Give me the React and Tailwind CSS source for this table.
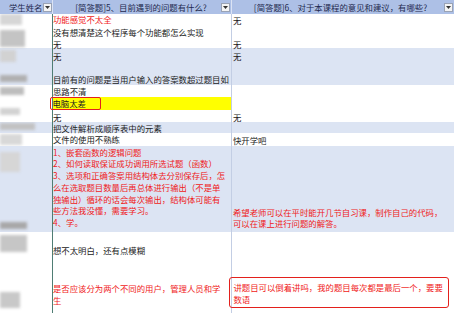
import React from 'react';

const RED = 'text-[#f01a1a]';

function Drop() {
  return (
    <div className="w-[9px] h-[9px] shrink-0 bg-[#f4f4f4] border border-[#9aa3b5] flex items-center justify-center">
      <svg width="5" height="3" viewBox="0 0 5 3">
        <path d="M0 0h5L2.5 3z" fill="#333" />
      </svg>
    </div>
  );
}

function L({ children, className = '' }) {
  return <div className={`h-[12px] leading-[12px] whitespace-nowrap ${className}`}>{children}</div>;
}

function L2({ children, className = '' }) {
  return <div className={`h-[11.8px] leading-[11.8px] whitespace-nowrap ${className}`}>{children}</div>;
}

function Blob({ className }) {
  return <div className={`blur-[1.5px] shrink-0 ${className}`} />;
}

function Band({ bg, h, a, b, c }) {
  return (
    <div className={`grid grid-cols-[53px_179px_1fr] ${bg} ${h}`}>
      <div className="border-r border-[#4f7d74] flex flex-col overflow-hidden">{a}</div>
      <div className="border-r border-[#c3cee4] flex flex-col min-w-0">{b}</div>
      <div className="flex flex-col min-w-0 pl-[1px]">{c}</div>
    </div>
  );
}

export default function App() {
  return (
    <div className="w-[454px] h-[313px] overflow-hidden bg-white text-[8.4px] text-[#222] font-['Noto_Sans_CJK_SC','Noto_Sans',sans-serif]">
      {/* header row */}
      <div className="grid grid-cols-[53px_179px_1fr] h-[14px] bg-[#adc0e6] text-[#1f2a4f]">
        <div className="flex items-center pl-[9px] border-r border-[#dbe3f4]">
          <span className="leading-[12px]">学生姓名</span>
          <Drop />
        </div>
        <div className="flex items-center pr-[1px] border-r border-[#dbe3f4]">
          <span className="flex-1 text-center pl-[8px] leading-[12px] whitespace-nowrap">[简答题]5、目前遇到的问题有什么?</span>
          <Drop />
        </div>
        <div className="flex items-center pr-[1px]">
          <span className="flex-1 text-center pl-[5px] leading-[12px] whitespace-nowrap">[简答题]6、对于本课程的意见和建议，有哪些?</span>
          <Drop />
        </div>
      </div>

      <Band
        bg="bg-white"
        h="h-[34px]"
        a={<>
          <Blob className="h-[11px] w-[22px] bg-[#d6d6d6]" />
          <Blob className="mt-[5px] h-[17px] w-[25px] bg-[#c4c4c4]" />
        </>}
        b={<>
          <L className={`-mt-[1px] ${RED}`}>功能感觉不太全</L>
          <L className="mt-[1px]">没有想清楚这个程序每个功能都怎么实现</L>
          <L>无</L>
        </>}
        c={<>
          <L>无</L>
          <L className="mt-[12px]">无</L>
        </>}
      />

      <Band
        bg="bg-[#dce4f3]"
        h="h-[37px]"
        a={<>
          <Blob className="mt-[2px] h-[12px] w-[16px] bg-[#d2d2d2]" />
          <Blob className="mt-[13px] h-[7px] w-[27px] bg-[#b0b0b0]" />
        </>}
        b={<>
          <L className="mt-[2px]">无</L>
          <L className="mt-[11px]">目前有的问题是当用户输入的答案数超过题目如</L>
        </>}
        c={<L className="mt-[2px]">无</L>}
      />

      <Band
        bg="bg-white"
        h="h-[37px]"
        a={<>
          <Blob className="mt-[2px] h-[8px] w-[24px] bg-[#bdbdbd]" />
          <Blob className="mt-[13px] h-[7px] w-[20px] bg-[#d2d2d2]" />
        </>}
        b={<>
          <L>思路不清</L>
          <div className="h-[13px] bg-[#ffff00] flex">
            <div className="-ml-[3px] w-[51px] h-[13px] border-[1.5px] border-[#e3201c] rounded-[2px] pl-[1.5px] leading-[10px] whitespace-nowrap">
              电脑太差
            </div>
          </div>
          <L className="mt-[1px]">无</L>
        </>}
        c={<L className="mt-[26px]">无</L>}
      />

      <Band
        bg="bg-[#dce4f3]"
        h="h-[11px]"
        a={<Blob className="mt-[1px] h-[7px] w-[35px] bg-[#c2c2c2]" />}
        b={<L>把文件解析成顺序表中的元素</L>}
        c={null}
      />

      <Band
        bg="bg-white"
        h="h-[13px]"
        a={<Blob className="mt-[1px] h-[11px] w-[22px] bg-[#d8d8d8]" />}
        b={<L>文件的使用不熟练</L>}
        c={<L className="mt-[1px]">快开学吧</L>}
      />

      <Band
        bg="bg-[#dce4f3]"
        h="h-[86px]"
        a={<>
          <Blob className="mt-[6px] h-[20px] w-[20px] bg-[#d6d6d6]" />
          <Blob className="mt-[50px] h-[7px] w-[27px] bg-[#a8a8a8]" />
        </>}
        b={<div className={`mt-[0.5px] flex flex-col ${RED}`}>
          <L2>1、嵌套函数的逻辑问题</L2>
          <L2>2、如何读取保证成功调用所选试题（函数）</L2>
          <L2>3、选项和正确答案用结构体去分别保存后，怎</L2>
          <L2>么在选取题目数量后再总体进行输出（不是单</L2>
          <L2>独输出）循环的话会每次输出，结构体可能有</L2>
          <L2>些方法我没懂，需要学习。</L2>
          <L2>4、学。</L2>
        </div>}
        c={<div className={`mt-[60.5px] flex flex-col ${RED}`}>
          <L2>希望老师可以在平时能开几节自习课，制作自己的代码，</L2>
          <L2>可以在课上进行问题的解答。</L2>
        </div>}
      />

      <Band
        bg="bg-white"
        h="h-[81px]"
        a={<>
          <Blob className="mt-[3px] h-[17px] w-[27px] bg-[#c6c6c6]" />
          <Blob className="mt-[40px] h-[16px] w-[20px] bg-[#c8c8c8]" />
        </>}
        b={<>
          <L className="mt-[12px]">想不太明白，还有点模糊</L>
          <L className={`mt-[25.5px] ${RED}`}>是否应该分为两个不同的用户，管理人员和学</L>
          <L className={RED}>生</L>
        </>}
        c={<div className={`mt-[44.5px] -ml-[4px] w-[220px] h-[31px] border-[1.5px] border-[#e3201c] rounded-[3px] pt-[3px] pl-[3.5px] ${RED}`}>
          <L>讲题目可以倒着讲吗，我的题目每次都是最后一个，要要</L>
          <L>数语</L>
        </div>}
      />
    </div>
  );
}
